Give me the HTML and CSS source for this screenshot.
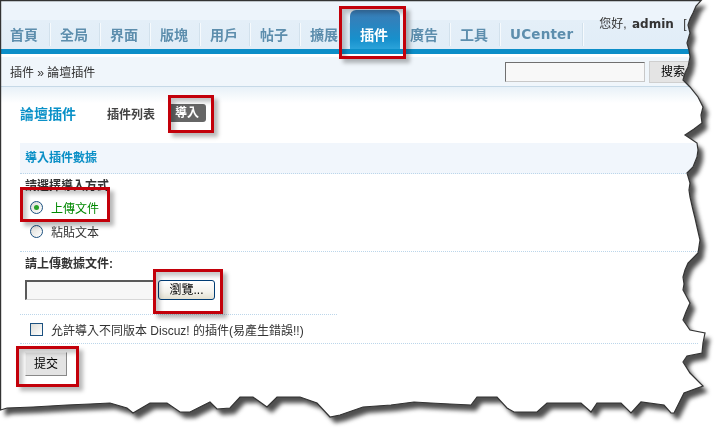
FILE: index.html
```html
<!DOCTYPE html>
<html lang="zh-Hant">
<head>
<meta charset="utf-8">
<title>論壇插件 - 導入</title>
<link rel="stylesheet" href="styles.css">
</head>
<body>
<div class="frame">
  <div class="paper-wrap">
    <div class="paper">
      <header class="header">
        <nav class="nav">
          <a class="tab">首頁</a>
          <a class="tab">全局</a>
          <a class="tab">界面</a>
          <a class="tab">版塊</a>
          <a class="tab">用戶</a>
          <a class="tab">帖子</a>
          <a class="tab">擴展</a>
          <a class="tab active">插件</a>
          <a class="tab">廣告</a>
          <a class="tab">工具</a>
          <a class="tab uc">UCenter</a>
        </nav>
        <div class="user">您好, <b>admin</b> [ 退出 ]</div>
      </header>
      <div class="bluebar"></div>
      <div class="crumb">
        <span class="path">插件 » 論壇插件</span>
        <div class="search">
          <span class="sinput"></span>
          <span class="sbtn">搜索</span>
        </div>
      </div>
      <main class="content">
        <div class="titlerow">
          <h3 class="ttl">論壇插件</h3>
          <span class="sub">插件列表</span>
          <span class="pill">導入</span>
        </div>
        <div class="tbl">
          <div class="th">導入插件數據</div>
          <div class="row r1">
            <div class="label">請選擇導入方式</div>
            <div class="opt on"><span class="radio on"></span>上傳文件</div>
            <div class="opt"><span class="radio"></span>粘貼文本</div>
          </div>
          <div class="row r2">
            <div class="label">請上傳數據文件:</div>
            <div class="file">
              <span class="finput"></span>
              <span class="fbtn">瀏覽...</span>
            </div>
          </div>
          <div class="row r3">
            <span class="check"></span>允許導入不同版本 Discuz! 的插件(易產生錯誤!!)
          </div>
          <div class="submitrow">
            <span class="submit">提交</span>
          </div>
        </div>
      </main>
    </div>
  </div>

  <svg class="edge" width="728" height="440" viewBox="0 0 728 440">
    <polygon fill="none" stroke="#333" stroke-width="1.2" points="0.6,0.6 701,0.6 696,6 693,13 690,19 688,25 690,33 687,43 689,50 690,57 688,67 685,73 683,80 690,87 698,97 703,107 701,115 702,123 694,129 685,135 697,143 698,150 697,157 693,167 687,173 690,183 689,190 690,197 693,210 695,218 697,227 700,240 698,253 688,263 685,270 683,277 684,284 683,290 690,303 686,312 683,320 690,330 705,333 703,343 702,353 687,356 683,362 690,373 703,386 684,393 679,403 674,413 671,413 664,405 641,402 631,413 621,403 597,403 591,412 581,403 547,403 537,412 514,412 507,408 497,397 477,397 471,405 450,404 431,403 414,402 391,405 363,407 340,415 330,417 317,403 300,397 277,397 267,407 253,397 240,397 230,408 217,409 210,402 190,412 180,412 167,403 150,403 133,413 127,408 110,403 90,404 67,405 33,407 7,408 0.6,410"/>
  </svg>

  <div class="mark m1"></div>
  <div class="mark m2"></div>
  <div class="mark m3"></div>
  <div class="mark m4"></div>
  <div class="mark m5"></div>
</div>
</body>
</html>
```

FILE: styles.css
```css
html, body {
  margin: 0;
  padding: 0;
  background: #fff;
}
body {
  font-family: "Liberation Sans", "Noto Sans CJK TC", sans-serif;
  font-size: 12px;
  color: #333;
}
.frame {
  position: relative;
  width: 728px;
  height: 440px;
  overflow: hidden;
  background: #fff;
}
.paper-wrap {
  width: 728px;
  height: 440px;
  filter: drop-shadow(5px 6px 2px rgba(70, 70, 70, 0.95));
}
.paper {
  width: 728px;
  height: 440px;
  background: #fff;
  clip-path: polygon(0 0, 701px 0, 696px 6px, 693px 13px, 690px 19px, 688px 25px, 690px 33px, 687px 43px, 689px 50px, 690px 57px, 688px 67px, 685px 73px, 683px 80px, 690px 87px, 698px 97px, 703px 107px, 701px 115px, 702px 123px, 694px 129px, 685px 135px, 697px 143px, 698px 150px, 697px 157px, 693px 167px, 687px 173px, 690px 183px, 689px 190px, 690px 197px, 693px 210px, 695px 218px, 697px 227px, 700px 240px, 698px 253px, 688px 263px, 685px 270px, 683px 277px, 684px 284px, 683px 290px, 690px 303px, 686px 312px, 683px 320px, 690px 330px, 705px 333px, 703px 343px, 702px 353px, 687px 356px, 683px 362px, 690px 373px, 703px 386px, 684px 393px, 679px 403px, 674px 413px, 671px 413px, 664px 405px, 641px 402px, 631px 413px, 621px 403px, 597px 403px, 591px 412px, 581px 403px, 547px 403px, 537px 412px, 514px 412px, 507px 408px, 497px 397px, 477px 397px, 471px 405px, 450px 404px, 431px 403px, 414px 402px, 391px 405px, 363px 407px, 340px 415px, 330px 417px, 317px 403px, 300px 397px, 277px 397px, 267px 407px, 253px 397px, 240px 397px, 230px 408px, 217px 409px, 210px 402px, 190px 412px, 180px 412px, 167px 403px, 150px 403px, 133px 413px, 127px 408px, 110px 403px, 90px 404px, 67px 405px, 33px 407px, 7px 408px, 0 410px);
}

/* header / nav */
.header {
  display: flex;
  height: 49px;
  background: linear-gradient(to bottom, #edf4fb 0, #edf4fb 20px, #e4eff8 20px, #e1edf7 49px);
}
.nav {
  display: flex;
  align-items: flex-end;
}
.tab {
  position: relative;
  display: block;
  height: 29px;
  line-height: 29px;
  padding: 0 12px 0 10px;
  font-size: 14px;
  font-weight: bold;
  color: #5d8ead;
  font-family: "Noto Sans CJK TC", sans-serif;
}
.tab::after {
  content: "";
  position: absolute;
  right: 0;
  top: 3px;
  bottom: 3px;
  width: 1px;
  background: #d2e1ec;
  box-shadow: 1px 0 0 #f6fafd;
}
.tab.active {
  box-sizing: border-box;
  height: 39px;
  padding: 10px 12px 0 10px;
  line-height: 29px;
  color: #fff;
  border-radius: 6px 6px 0 0;
  background: linear-gradient(to bottom, #3c7db6 0, #2f82bd 30%, #1790cc 75%, #2ba3da 100%);
}
.tab.active::after {
  display: none;
}
.tab.uc {
  padding-right: 10px;
  font-family: "DejaVu Sans", sans-serif;
  font-size: 13.5px;
  letter-spacing: 0.2px;
}
.user {
  margin: 17px 0 0 16px;
  white-space: nowrap;
  line-height: 14px;
  color: #333;
}
.user b {
  font-family: "DejaVu Sans", sans-serif;
  margin-left: 2px;
  margin-right: 6px;
}
.bluebar {
  height: 5px;
  background: #0c8ec8;
}
.crumb {
  display: flex;
  align-items: center;
  height: 29px;
  margin-top: 3px;
  padding: 0 31px 0 10px;
  background: #f0f6fb;
  border-bottom: 1px solid #c6d9e7;
}
.path {
  color: #333;
}
.search {
  display: flex;
  align-items: center;
  margin-left: auto;
}
.sinput {
  width: 138px;
  height: 18px;
  background: #f8f8f8;
  border: 1px solid #c8c8c8;
  border-top-color: #707070;
  border-left-color: #707070;
}
.sbtn {
  margin-left: 4px;
  width: 46px;
  height: 20px;
  line-height: 20px;
  text-align: center;
  background: #e4e4e4;
  border: 1px solid #cfcfcf;
  color: #000;
}

/* content */
.content {
  padding: 17px 30px 0 20px;
  background: linear-gradient(to bottom, #e8f1f8 0, #fff 16px) no-repeat;
}
.titlerow {
  display: flex;
  align-items: center;
  height: 18px;
}
.ttl {
  margin: 2px 0 0;
  font-size: 14px;
  font-weight: bold;
  color: #0a91c8;
  line-height: 18px;
}
.sub {
  margin-left: 31px;
  font-weight: bold;
  color: #444;
}
.pill {
  margin-left: 13px;
  padding: 0 7px;
  height: 18px;
  line-height: 18px;
  border-radius: 3px;
  background: #666;
  color: #fff;
  font-weight: bold;
}
.tbl {
  margin-top: 21px;
}
.th {
  height: 30px;
  line-height: 30px;
  padding-left: 5px;
  background: #f1f6fc;
  border-bottom: 1px dotted #bcd6ea;
  color: #0a8fc6;
  font-weight: bold;
}
.row {
  border-bottom: 1px dotted #bcd6ea;
}
.label {
  padding-left: 5px;
  font-weight: bold;
  color: #333;
  line-height: 18px;
}
.r1 {
  padding: 3px 0 8px;
}
.r1 .opt:first-of-type {
  margin-top: 2px;
}
.opt {
  display: flex;
  align-items: center;
  height: 24px;
  padding-left: 10px;
  color: #333;
}
.opt.on {
  color: #080;
}
.radio {
  position: relative;
  width: 11px;
  height: 11px;
  margin-right: 8px;
  border: 1px solid #1c5180;
  border-radius: 50%;
  background: linear-gradient(135deg, #dcdcd7, #fff);
}
.radio.on::after {
  content: "";
  position: absolute;
  left: 3px;
  top: 3px;
  width: 5px;
  height: 5px;
  border-radius: 50%;
  background: #2aa12a;
}
.r2 {
  width: 317px;
  padding: 3px 0 14px;
}
.file {
  display: flex;
  align-items: center;
  margin: 7px 0 0 5px;
}
.finput {
  width: 127px;
  height: 17px;
  background: #f7f7f7;
  border-style: solid;
  border-color: #5a5a5a #d8d8d8 #d8d8d8 #5a5a5a;
  border-width: 2px 1px 1px 2px;
}
.fbtn {
  margin-left: 3px;
  width: 55px;
  height: 18px;
  line-height: 18px;
  text-align: center;
  border: 1px solid #003c74;
  border-radius: 3px;
  background: linear-gradient(to bottom, #fff, #f3f2ec 60%, #e3e0d1);
  color: #000;
}
.r3 {
  display: flex;
  align-items: center;
  height: 22px;
  padding: 3px 0 3px 10px;
}
.check {
  width: 11px;
  height: 11px;
  margin-right: 8px;
  border: 1px solid #1c5180;
  background: linear-gradient(135deg, #dcdcd7, #fff);
}
.submitrow {
  padding: 8px 0 0 5px;
}
.submit {
  display: inline-block;
  width: 40px;
  height: 22px;
  line-height: 22px;
  text-align: center;
  background: #e3e3e3;
  border: 1px solid;
  border-color: #f4f4f4 #888 #888 #f4f4f4;
  color: #000;
}

/* overlays */
.edge {
  position: absolute;
  left: 0;
  top: 0;
}
.mark {
  position: absolute;
  box-sizing: border-box;
  border: 3px solid #c3000a;
  box-shadow: 4px 4px 4px rgba(0, 0, 0, 0.28), inset 4px 4px 4px rgba(0, 0, 0, 0.22);
}
.m1 { left: 339px; top: 6px;   width: 67px; height: 53px; }
.m2 { left: 168px; top: 95px;  width: 46px; height: 38px; }
.m3 { left: 20px;  top: 187px; width: 90px; height: 35px; }
.m4 { left: 153px; top: 269px; width: 70px; height: 45px; }
.m5 { left: 16px;  top: 346px; width: 63px; height: 41px; }
```
